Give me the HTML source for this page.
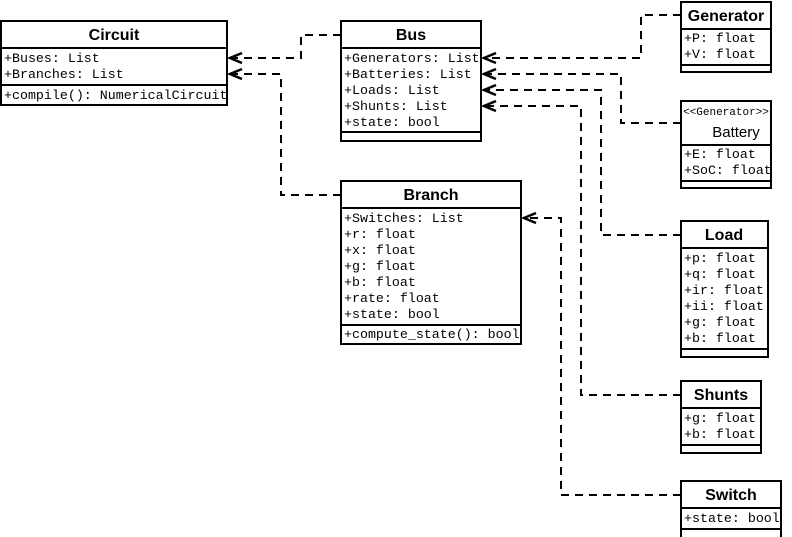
<!DOCTYPE html>
<html><head><style>
html,body{margin:0;padding:0;background:#fff;width:792px;height:537px;overflow:hidden}
svg{display:block}
.t{font-family:"Liberation Sans",sans-serif;font-weight:bold;font-size:16px;text-anchor:middle}
.m{font-family:"Liberation Mono",monospace;font-size:13.3px}
.s{font-family:"Liberation Mono",monospace;font-size:11px;text-anchor:middle}
.n{font-family:"Liberation Sans",sans-serif;font-size:15px;text-anchor:middle}
</style></head><body>
<svg width="792" height="537" viewBox="0 0 792 537">
<g fill="none" stroke="#000" stroke-width="2">
<rect x="1" y="21" width="226" height="84"/><line x1="1" y1="48" x2="227" y2="48"/><line x1="1" y1="85" x2="227" y2="85"/>
<rect x="341" y="21" width="140" height="120"/><line x1="341" y1="48" x2="481" y2="48"/><line x1="341" y1="132" x2="481" y2="132"/>
<rect x="681" y="2" width="90" height="70"/><line x1="681" y1="29" x2="771" y2="29"/><line x1="681" y1="65" x2="771" y2="65"/>
<rect x="681" y="101" width="90" height="87"/><line x1="681" y1="145" x2="771" y2="145"/><line x1="681" y1="181" x2="771" y2="181"/>
<rect x="341" y="181" width="180" height="163"/><line x1="341" y1="208" x2="521" y2="208"/><line x1="341" y1="325" x2="521" y2="325"/>
<rect x="681" y="221" width="87" height="136"/><line x1="681" y1="248" x2="768" y2="248"/><line x1="681" y1="349" x2="768" y2="349"/>
<rect x="681" y="381" width="80" height="72"/><line x1="681" y1="408" x2="761" y2="408"/><line x1="681" y1="445" x2="761" y2="445"/>
<rect x="681" y="481" width="100" height="60"/><line x1="681" y1="508" x2="781" y2="508"/><line x1="681" y1="529" x2="781" y2="529"/>
</g>
<g fill="none" stroke="#000" stroke-width="2" stroke-dasharray="8,6">
<path d="M341 35H301V58H230"/>
<path d="M341 195H281V74H230"/>
<path d="M681 15H641V58H484"/>
<path d="M681 123H621V74H484"/>
<path d="M681 235H601V90H484"/>
<path d="M681 395H581V106H484"/>
<path d="M681 495H561V218H524"/>
</g>
<g fill="none" stroke="#000" stroke-width="2.5">
<path d="M242 53L230 58L242 63"/>
<path d="M242 69L230 74L242 79"/>
<path d="M496 53L484 58L496 63"/>
<path d="M496 69L484 74L496 79"/>
<path d="M496 85L484 90L496 95"/>
<path d="M496 101L484 106L496 111"/>
<path d="M536 213L524 218L536 223"/>
</g>
<g fill="#000">
<text class="t" x="114" y="40">Circuit</text>
<text class="m" x="4" y="62">+Buses: List</text>
<text class="m" x="4" y="78">+Branches: List</text>
<text class="m" x="4" y="99">+compile(): NumericalCircuit</text>

<text class="t" x="411" y="40">Bus</text>
<text class="m" x="344" y="62">+Generators: List</text>
<text class="m" x="344" y="78">+Batteries: List</text>
<text class="m" x="344" y="94">+Loads: List</text>
<text class="m" x="344" y="110">+Shunts: List</text>
<text class="m" x="344" y="126">+state: bool</text>

<text class="t" x="726" y="21">Generator</text>
<text class="m" x="684" y="42">+P: float</text>
<text class="m" x="684" y="58">+V: float</text>

<text class="s" x="726" y="115">&lt;&lt;Generator&gt;&gt;</text>
<text class="n" x="736" y="137">Battery</text>
<text class="m" x="684" y="158">+E: float</text>
<text class="m" x="684" y="174">+SoC: float</text>

<text class="t" x="431" y="200">Branch</text>
<text class="m" x="344" y="222">+Switches: List</text>
<text class="m" x="344" y="238">+r: float</text>
<text class="m" x="344" y="254">+x: float</text>
<text class="m" x="344" y="270">+g: float</text>
<text class="m" x="344" y="286">+b: float</text>
<text class="m" x="344" y="302">+rate: float</text>
<text class="m" x="344" y="318">+state: bool</text>
<text class="m" x="344" y="338">+compute_state(): bool</text>

<text class="t" x="724" y="240">Load</text>
<text class="m" x="684" y="262">+p: float</text>
<text class="m" x="684" y="278">+q: float</text>
<text class="m" x="684" y="294">+ir: float</text>
<text class="m" x="684" y="310">+ii: float</text>
<text class="m" x="684" y="326">+g: float</text>
<text class="m" x="684" y="342">+b: float</text>

<text class="t" x="721" y="400">Shunts</text>
<text class="m" x="684" y="422">+g: float</text>
<text class="m" x="684" y="438">+b: float</text>

<text class="t" x="731" y="500">Switch</text>
<text class="m" x="684" y="522">+state: bool</text>
</g>
</svg>
</body></html>
